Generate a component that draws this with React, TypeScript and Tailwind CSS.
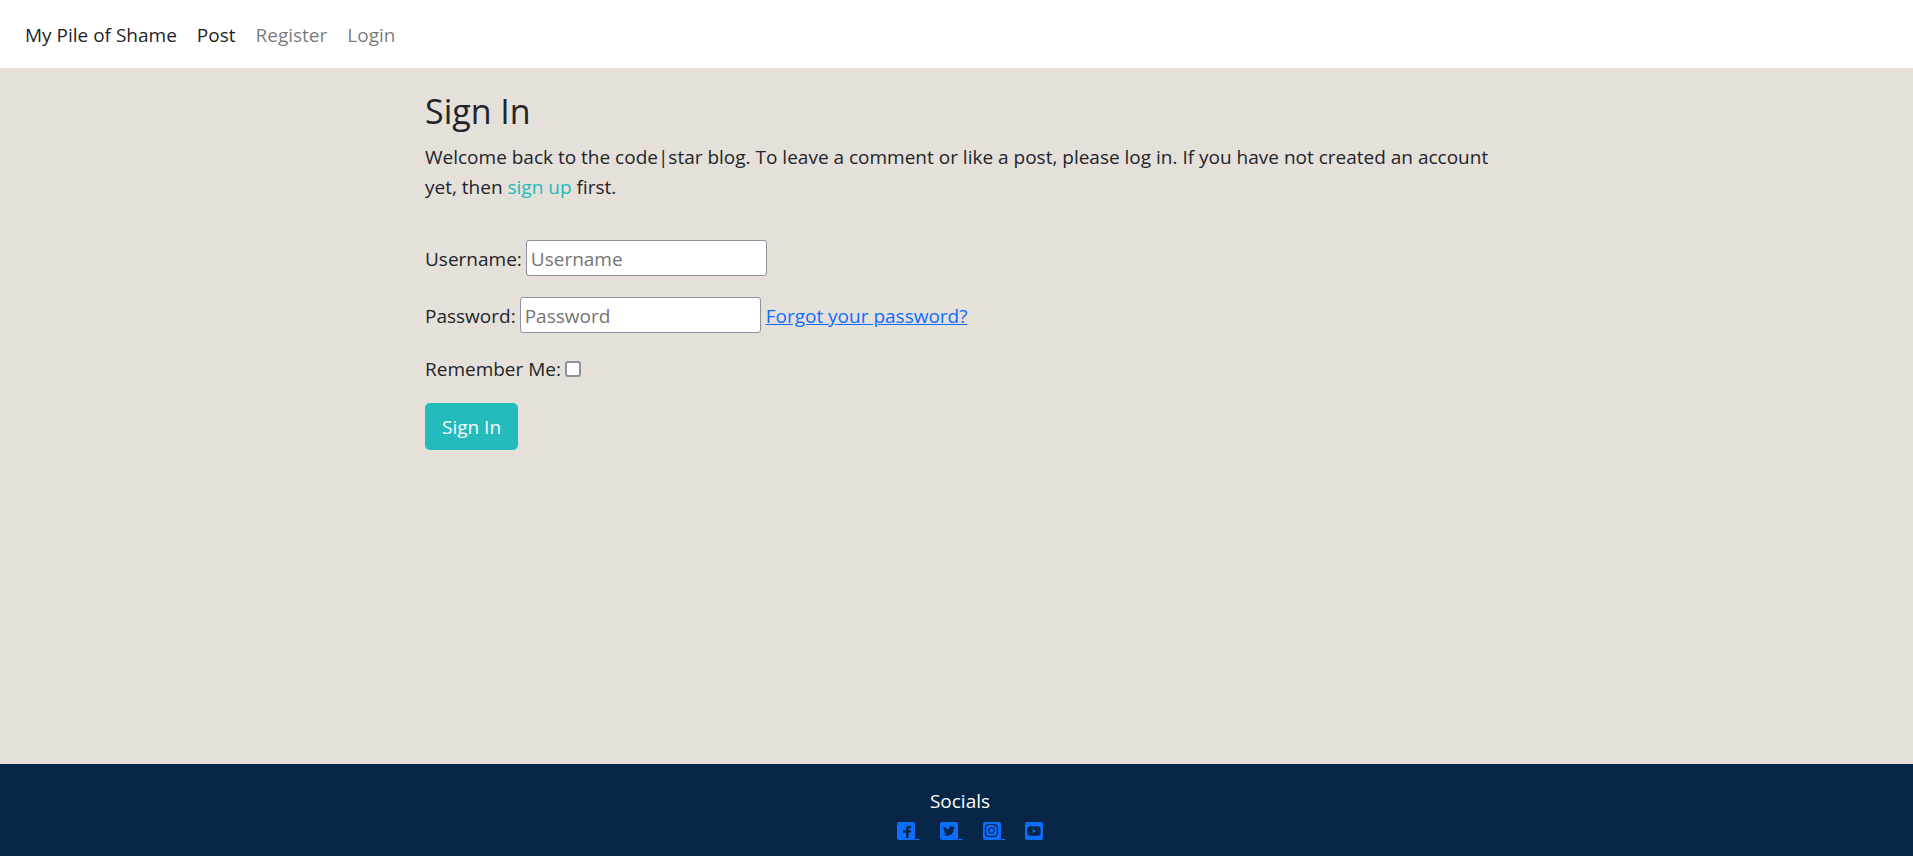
import { FaInstagram, FaTwitter, FaYoutube } from "react-icons/fa";

const navLinks = [
  { label: "Post", className: "text-black/90" },
  { label: "Register", className: "text-black/55" },
  { label: "Login", className: "text-black/55" },
];

function FacebookMark({ className }: { className?: string }) {
  return (
    <svg viewBox="0 0 18 18" fill="currentColor" className={className} aria-hidden="true">
      <path d="M9 16v-5.2H6V8.2h3V6.9c0-2 1.2-3.1 3.1-3.1h2v2.5h-1.2c-.9 0-1.3.4-1.3 1.2v.7h2.5l-.4 2.6h-2.1V16Z" />
    </svg>
  );
}

const socials = [
  { label: "Facebook", Icon: FacebookMark, size: "size-[18px]" },
  { label: "Twitter", Icon: FaTwitter, size: "size-3" },
  { label: "Instagram", Icon: FaInstagram, size: "size-[15px]" },
  { label: "YouTube", Icon: FaYoutube, size: "size-[14px]" },
];

const field = "h-9 w-[241px] rounded-[3px] border border-[#8f8f9d] bg-white px-1 pt-0.5 placeholder:text-[#757575]";

export default function App() {
  return (
    <div className="flex min-h-screen flex-col bg-[#e5e0da] font-['Open_Sans','Noto_Sans',sans-serif] text-[19px] leading-[30px] text-[#212529]">
      <header className="bg-white px-[25px] pt-5 pb-[18px]">
        <nav className="flex gap-5">
          <a href="#home" className="text-black/90">My Pile of Shame</a>
          {navLinks.map(({ label, className }) => (
            <a key={label} href="#nav" className={className}>{label}</a>
          ))}
        </nav>
      </header>

      <main className="mx-auto w-full max-w-[1063px] flex-1 pt-[23px]">
        <h1 className="mb-[11px] text-[34px] leading-10">Sign In</h1>
        <p className="-mr-6">
          Welcome back to the code|star blog. To leave a comment or like a post, please log in. If you have not created an account yet, then{" "}
          <a href="#signup" className="text-[#23bbbb]">sign up</a> first.
        </p>
        <form className="mt-[38px] flex flex-col items-start gap-[21px]">
          <div className="flex items-center gap-1">
            <label htmlFor="username" className="pt-0.5">Username:</label>
            <input id="username" type="text" placeholder="Username" className={field} />
          </div>
          <div className="flex items-center gap-1">
            <label htmlFor="password" className="pt-0.5">Password:</label>
            <input id="password" type="password" placeholder="Password" className={field} />
            <a href="#reset" className="pt-0.5 pl-px text-[#0d6efd] underline">Forgot your password?</a>
          </div>
          <div className="flex items-center gap-1">
            <label htmlFor="remember">Remember Me:</label>
            <input id="remember" type="checkbox" className="size-4 appearance-none rounded-[3px] border-2 border-[#8f8f9d] bg-white checked:bg-[#0d6efd]" />
          </div>
          <button type="submit" className="-mt-0.5 rounded-[5px] bg-[#23bbbb] px-[17px] pt-[9px] pb-2 text-white">Sign In</button>
        </form>
      </main>

      <footer className="flex flex-col items-center bg-[#082647] pt-[22px] pb-2.5 text-white">
        <h2 className="pl-[7px]">Socials</h2>
        <ul className="flex gap-5 pl-8">
          {socials.map(({ label, Icon, size }, i) => (
            <li key={label}>
              <a href="#social" aria-label={label} className="flex items-center text-[#0d6efd]">
                <span className="mb-px flex size-[18px] items-center justify-center rounded-xs bg-[#0d6efd] text-[#082647]">
                  <Icon className={size} />
                </span>
                <span className={i < socials.length - 1 ? "underline" : ""}>&nbsp;</span>
              </a>
            </li>
          ))}
        </ul>
      </footer>
    </div>
  );
}
